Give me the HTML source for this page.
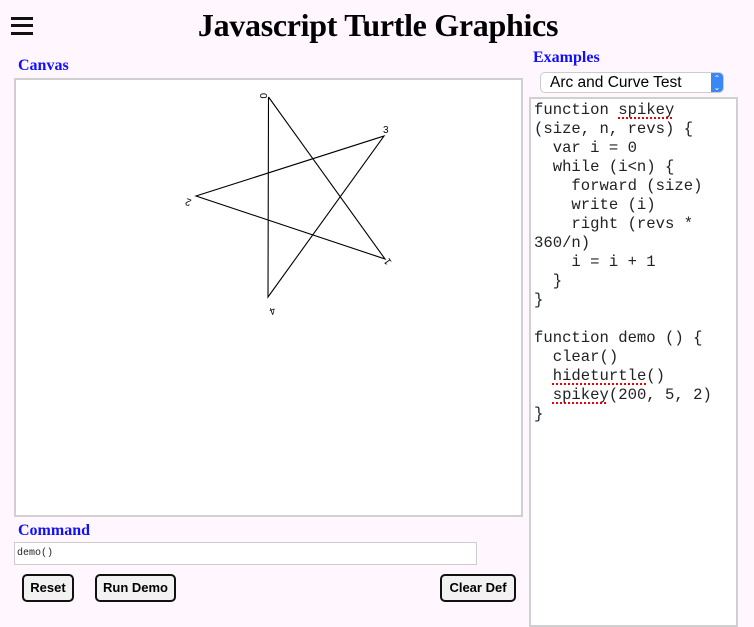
<!DOCTYPE html>
<html><head><meta charset="utf-8"><style>
*{box-sizing:border-box;margin:0;padding:0}
body{width:754px;height:619px;background:#fff6fe;position:relative;overflow:hidden;font-family:"Liberation Serif",serif}
.abs{position:absolute}
h1{position:absolute;left:0;width:756px;top:6px;text-align:center;font-size:32px;font-weight:bold;line-height:38px;color:#000;letter-spacing:-0.3px}
.lbl{position:absolute;color:#1010ff;font-weight:bold;font-size:16px;font-family:"Liberation Serif",serif}
.bar{position:absolute;left:11px;width:22px;height:3px;background:#111}
.btn{position:absolute;top:574px;height:28px;border:2px solid #111;border-radius:5px;background:#f2f2f2;font:bold 13px "Liberation Sans",sans-serif;text-align:center;line-height:24px;color:#000}
pre{position:absolute;left:529px;top:97px;width:209px;height:530px;border:2px solid #d0d0d0;background:#fff;font:15.6px/19px "Liberation Mono",monospace;padding:2px 0 0 3px;color:#222}
u{text-decoration:underline dotted #e00;text-decoration-thickness:2px;text-underline-offset:3px}
</style></head><body>
<div class="bar" style="top:17px"></div><div class="bar" style="top:24px"></div><div class="bar" style="top:32px"></div>
<h1>Javascript Turtle Graphics</h1>
<div class="lbl" style="left:18px;top:57px">Canvas</div>
<div class="lbl" style="left:533px;top:49px">Examples</div>
<div class="abs" style="left:14px;top:78px;width:509px;height:439px;border:2px solid #d0d0d0;background:#fff"></div>
<svg class="abs" style="left:0;top:0" width="754" height="619">
<polyline points="268.5,97 385,259 196,196 384,136 268,297 268.5,97" fill="none" stroke="#000" stroke-width="1.1"/>
<g font-family="Liberation Sans,sans-serif" font-size="10" fill="#000">
<text x="0" y="0" transform="translate(260,93) rotate(90)">0</text>
<text x="0" y="0" transform="translate(392,262) rotate(235)">1</text>
<text x="0" y="0" transform="translate(192,200) rotate(200)">2</text>
<text x="383" y="133">3</text>
<text x="0" y="0" transform="translate(274,307) rotate(160)">4</text>
</g></svg>
<div class="abs" style="left:540px;top:72px;width:184px;height:21px;background:#fff;border:1px solid #ccc;border-radius:5px;font:15.5px/19px 'Liberation Sans',sans-serif;padding-left:9px;overflow:hidden">Arc and Curve Test<div class="abs" style="right:0;top:0;width:12px;height:21px;background:#3b88f5;color:#fff;font-size:8px;line-height:9px;text-align:center;padding-top:1px">⌃<br>⌄</div></div>
<pre>function <u>spikey</u>
(size, n, revs) {
  var i = 0
  while (i&lt;n) {
    forward (size)
    write (i)
    right (revs *
360/n)
    i = i + 1
  }
}

function demo () {
  clear()
  <u>hideturtle</u>()
  <u>spikey</u>(200, 5, 2)
}</pre>
<div class="lbl" style="left:18px;top:522px">Command</div>
<div class="abs" style="left:14px;top:542px;width:463px;height:23px;border:1px solid #ccc;background:#fff;font:10px/22px 'Liberation Mono',monospace;padding-left:2px;color:#222">demo()</div>
<div class="btn" style="left:22px;width:52px">Reset</div>
<div class="btn" style="left:95px;width:81px">Run Demo</div>
<div class="btn" style="left:440px;width:76px">Clear Def</div>
</body></html>
